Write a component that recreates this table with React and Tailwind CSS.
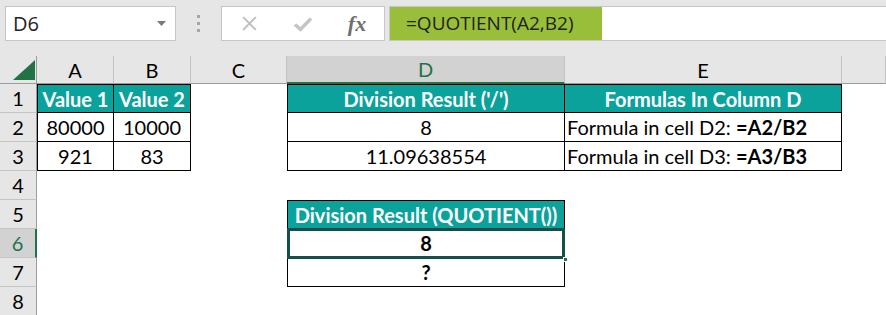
import React from "react";

const font = { fontFamily: "Lato, 'Liberation Sans', sans-serif" };

const cols = ["A", "B", "C", "D", "E", ""];

function ColHead({ label, active }) {
  return (
    <div
      className={
        "flex items-center justify-center border-r border-[#c4c4c4] text-[20px] " +
        (active
          ? "bg-[#d2d2d2] text-[#217346] border-b-2 border-b-[#217346]"
          : "bg-[#e6e6e6] text-black border-b border-b-[#9b9b9b]")
      }
    >
      {label}
    </div>
  );
}

function RowHead({ n, active }) {
  return (
    <div
      className={
        "flex items-center justify-center border-b border-[#c4c4c4] text-[20px] " +
        (active
          ? "bg-[#d2d2d2] text-[#217346] border-r-2 border-r-[#217346]"
          : "bg-[#e6e6e6] text-black border-r border-r-[#9b9b9b]")
      }
    >
      {n}
    </div>
  );
}

function Cell({ children, className = "" }) {
  return <div className={"flex items-center text-[20px] text-black " + className}>{children}</div>;
}

const head = "justify-center bg-[#0ba29c] text-white font-bold border border-black";
const body = "border-x border-b border-black";

export default function App() {
  return (
    <div className="w-[886px] h-[315px] overflow-hidden bg-white" style={font}>
      {/* formula bar */}
      <div className="h-[56px] bg-[#e6e6e6] flex items-start pt-[6px] pl-[5px]">
        <div className="w-[171px] h-[35px] bg-white border border-[#c6c6c6] flex items-center justify-between pl-[7px] pr-[9px]">
          <span className="text-[20px] text-[#222]" style={{ fontFamily: "'Open Sans', sans-serif" }}>D6</span>
          <svg width="9" height="5" viewBox="0 0 9 5">
            <path d="M0 0h9L4.5 5z" fill="#7a7a7a" />
          </svg>
        </div>
        <div className="w-[45px] h-[35px] flex flex-col items-center justify-center gap-[4px]">
          <span className="w-[3px] h-[3px] bg-[#a6a6a6]" />
          <span className="w-[3px] h-[3px] bg-[#a6a6a6]" />
          <span className="w-[3px] h-[3px] bg-[#a6a6a6]" />
        </div>
        <div className="w-[164px] h-[35px] bg-white border border-[#c6c6c6] flex items-center">
          <div className="w-[54px] flex justify-center">
            <svg width="17" height="17" viewBox="0 0 16 16">
              <path d="M2 2l12 12M14 2L2 14" stroke="#bdbdbd" strokeWidth="1.8" />
            </svg>
          </div>
          <div className="w-[54px] flex justify-center">
            <svg width="20" height="16" viewBox="0 0 20 16">
              <path d="M2 8.5l5.5 5L18 2.5" stroke="#c4c4c4" strokeWidth="3.4" fill="none" />
            </svg>
          </div>
          <div className="w-[54px] flex justify-center">
            <span className="italic text-[22px] leading-none text-[#707070] font-bold" style={{ fontFamily: "'Liberation Serif', serif" }}>
              fx
            </span>
          </div>
        </div>
        <div className="ml-[4px] flex-1 h-[35px] bg-white border border-[#c6c6c6] border-r-0 flex">
          <div className="w-[212px] h-full bg-[#99bf3a] flex items-center pl-[16px] text-[19px] text-[#222]" style={{ fontFamily: "'Open Sans', sans-serif" }}>
            =QUOTIENT(A2,B2)
          </div>
        </div>
      </div>

      {/* sheet */}
      <div className="grid grid-cols-[37px_77px_77px_96px_278px_277px_1fr] grid-rows-[28px_repeat(8,29px)]">
        <div className="relative bg-[#e6e6e6] border-r border-r-[#9b9b9b] border-b border-b-[#9b9b9b]">
          <svg className="absolute left-[13px] top-[4px]" width="22" height="20" viewBox="0 0 22 20">
            <path d="M22 0v20H0z" fill="#217346" />
          </svg>
        </div>
        {cols.map((c) => (
          <ColHead key={c || "f"} label={c} active={c === "D"} />
        ))}

        {/* row 1 */}
        <RowHead n={1} />
        <Cell className={head}>Value 1</Cell>
        <Cell className={head + " border-l-0"}>Value 2</Cell>
        <Cell />
        <Cell className={head}>Division Result ('/')</Cell>
        <Cell className={head + " border-l-0"}>Formulas In Column D</Cell>
        <Cell />

        {/* row 2 */}
        <RowHead n={2} />
        <Cell className={body + " justify-center"}>80000</Cell>
        <Cell className={body + " border-l-0 justify-center"}>10000</Cell>
        <Cell />
        <Cell className={body + " justify-center"}>8</Cell>
        <Cell className={body + " border-l-0 pl-[2px] whitespace-nowrap"}>
          Formula in cell D2:&nbsp;<b>=A2/B2</b>
        </Cell>
        <Cell />

        {/* row 3 */}
        <RowHead n={3} />
        <Cell className={body + " justify-center"}>921</Cell>
        <Cell className={body + " border-l-0 justify-center"}>83</Cell>
        <Cell />
        <Cell className={body + " justify-center"}>11.09638554</Cell>
        <Cell className={body + " border-l-0 pl-[2px] whitespace-nowrap"}>
          Formula in cell D3:&nbsp;<b>=A3/B3</b>
        </Cell>
        <Cell />

        {/* row 4 */}
        <RowHead n={4} />
        <Cell /><Cell /><Cell /><Cell /><Cell /><Cell />

        {/* row 5 */}
        <RowHead n={5} />
        <Cell /><Cell /><Cell />
        <Cell className={head + " whitespace-nowrap"}>Division Result (QUOTIENT())</Cell>
        <Cell /><Cell />

        {/* row 6: active cell with selection frame and fill handle */}
        <RowHead n={6} active />
        <Cell /><Cell /><Cell />
        <Cell className={body + " justify-center font-bold relative"}>
          8
          <span className="absolute -left-[1px] -right-[1px] -top-[1px] bottom-[-2px] border-[3px] border-solid border-[#124f4d]" />
          <span className="absolute right-[-4px] bottom-[-5px] w-[5px] h-[5px] bg-[#217346] border border-white" />
        </Cell>
        <Cell /><Cell />

        {/* row 7 */}
        <RowHead n={7} />
        <Cell /><Cell /><Cell />
        <Cell className={body + " justify-center font-bold"}>?</Cell>
        <Cell /><Cell />

        {/* row 8 */}
        <RowHead n={8} />
        <Cell /><Cell /><Cell /><Cell /><Cell /><Cell />
      </div>
    </div>
  );
}
